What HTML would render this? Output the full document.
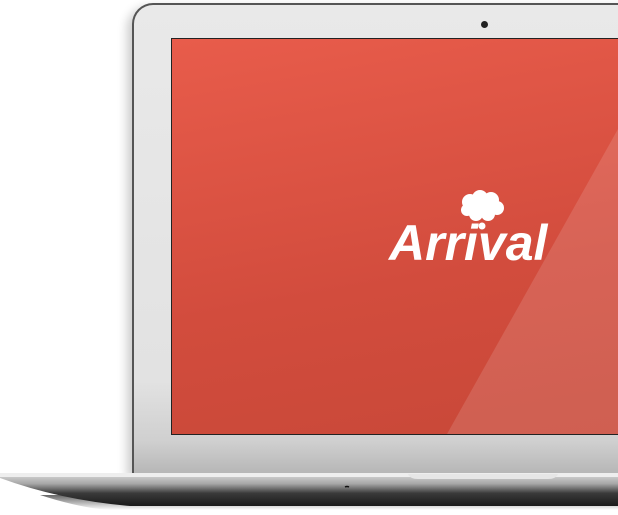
<!DOCTYPE html>
<html><head><style>
html,body{margin:0;padding:0;width:618px;height:515px;overflow:hidden;background:#fff;position:relative}
.lid{position:absolute;left:132px;top:3px;width:520px;height:472px;border-radius:21px 21px 0 0;background:#555;box-shadow:-5px 4px 10px rgba(0,0,0,.2)}
.bez{position:absolute;left:134px;top:5px;width:520px;height:470px;border-radius:19px 19px 0 0;background:linear-gradient(#e9e9e9,#e2e2e2 80%,#cfcfcf 93%,#b5b5b5)}
.cam{position:absolute;left:481px;top:21px;width:7px;height:7px;border-radius:50%;background:#222}
.scr{position:absolute;left:171px;top:38px;width:460px;height:397px;background:#222}
.red{position:absolute;left:172px;top:39px;width:460px;height:395px;background:linear-gradient(170deg,#e85c4b,#d24c3d 60%,#c84838);overflow:hidden}
.gl{position:absolute;left:0;top:0;width:460px;height:395px;background:rgba(255,255,255,.13);clip-path:polygon(446px 90px,460px 90px,460px 395px,275px 395px)}
.txt{position:absolute;left:389px;top:214px;font:italic bold 50px "Liberation Sans",sans-serif;color:#fff;letter-spacing:0px}
</style></head><body>
<div class="lid"></div><div class="bez"></div>
<div class="cam"></div>
<div class="scr"></div>
<div class="red"><div class="gl"></div></div>
<svg style="position:absolute;left:458px;top:190px" width="50" height="42" viewBox="0 0 50 42">
<g fill="#fff"><circle cx="12" cy="12" r="8"/><circle cx="22" cy="8" r="8"/><circle cx="33" cy="10" r="8"/><circle cx="39" cy="18" r="7"/><circle cx="30" cy="24" r="7"/><circle cx="18" cy="24" r="7"/><circle cx="9" cy="20" r="6"/><circle cx="24" cy="16" r="9"/><circle cx="24" cy="36" r="3.5"/></g></svg>
<div class="txt">Arrival</div>
<svg style="position:absolute;left:0;top:470px" width="618" height="45" viewBox="0 0 618 45">
<defs>
<linearGradient id="b" x1="0" y1="0" x2="0" y2="1"><stop offset="0" stop-color="#d8d8d8"/><stop offset=".3" stop-color="#a8a8a8"/><stop offset=".6" stop-color="#3a3a3a"/><stop offset="1" stop-color="#1a1a1a"/></linearGradient>
<linearGradient id="s" x1="0" y1="0" x2="0" y2="1"><stop offset="0" stop-color="#000" stop-opacity=".6"/><stop offset="1" stop-color="#000" stop-opacity="0"/></linearGradient>
</defs>
<path d="M40 25 Q80 38 110 40 L618 40 L618 25 Z" fill="url(#s)"/>
<path d="M0 4 L618 4 L618 36 L130 36 Q60 30 0 8 Z" fill="url(#b)"/>
<rect x="0" y="3" width="618" height="4" fill="#eee"/>
<path d="M345 17 Q347 16 349 17" stroke="#111" stroke-width="1.5" fill="none"/>
<path d="M408 4 L558 4 Q556 9 548 9 L418 9 Q410 9 408 4Z" fill="#e6e6e6"/>
</svg>
</body></html>
